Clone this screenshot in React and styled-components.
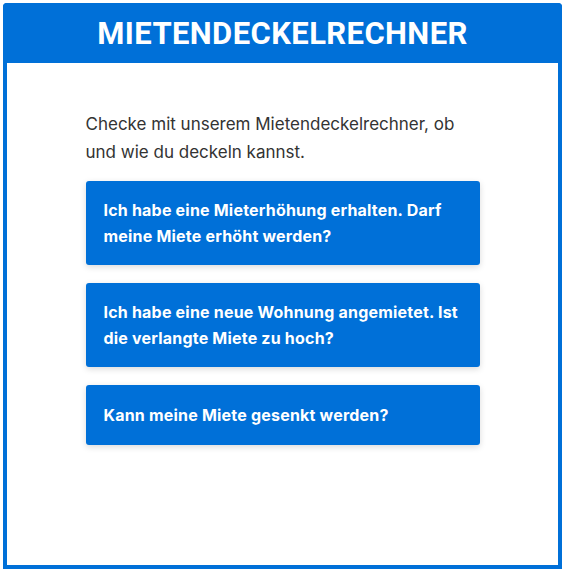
import React from 'react';
import styled, { createGlobalStyle } from 'styled-components';

const blue = '#0070d8';

const GlobalStyle = createGlobalStyle`
  html, body {
    margin: 0;
    padding: 0;
    background: #fff;
  }
  body {
    font-family: Inter, "Noto Sans", sans-serif;
  }
`;

const Card = styled.section`
  margin: 3px;
  width: 559px;
  height: 566px;
  box-sizing: border-box;
  border: 4px solid ${blue};
  border-top: none;
  border-radius: 4px 4px 0 0;
  display: flex;
  flex-direction: column;
`;

const Header = styled.header`
  height: 60px;
  margin: 0 -4px;
  background: ${blue};
  border-radius: 4px 4px 0 0;
  display: flex;
  align-items: center;
  justify-content: center;
`;

const Title = styled.h1`
  margin: 0;
  color: #fff;
  font: 700 31px Roboto, sans-serif;
  letter-spacing: 0.4px;
  text-transform: uppercase;
`;

const Body = styled.div`
  padding: 47px 0 0;
  display: flex;
  flex-direction: column;
  align-items: center;
`;

const Inner = styled.div`
  width: 394px;
  display: flex;
  flex-direction: column;
`;

const Intro = styled.p`
  margin: 0 0 15px;
  color: #333;
  font-size: 17px;
  line-height: 28px;
`;

const Options = styled.div`
  display: flex;
  flex-direction: column;
  gap: 18px;
`;

const Option = styled.button`
  display: block;
  width: 100%;
  box-sizing: border-box;
  min-height: 60px;
  padding: 16px 18px;
  border: none;
  border-radius: 3px;
  background: ${blue};
  color: #fff;
  text-align: left;
  font: 700 16px/26px Inter, sans-serif;
  letter-spacing: 0.2px;
  box-shadow: 0 2px 6px rgba(0, 0, 0, 0.15);
  cursor: pointer;
`;

const questions = [
  'Ich habe eine Mieterhöhung erhalten. Darf meine Miete erhöht werden?',
  'Ich habe eine neue Wohnung angemietet. Ist die verlangte Miete zu hoch?',
  'Kann meine Miete gesenkt werden?',
];

export default function App() {
  return (
    <>
      <GlobalStyle />
      <Card>
        <Header>
          <Title>Mietendeckelrechner</Title>
        </Header>
        <Body>
          <Inner>
            <Intro>Checke mit unserem Mietendeckelrechner, ob und wie du deckeln kannst.</Intro>
            <Options>
              {questions.map(q => (
                <Option key={q}>{q}</Option>
              ))}
            </Options>
          </Inner>
        </Body>
      </Card>
    </>
  );
}
